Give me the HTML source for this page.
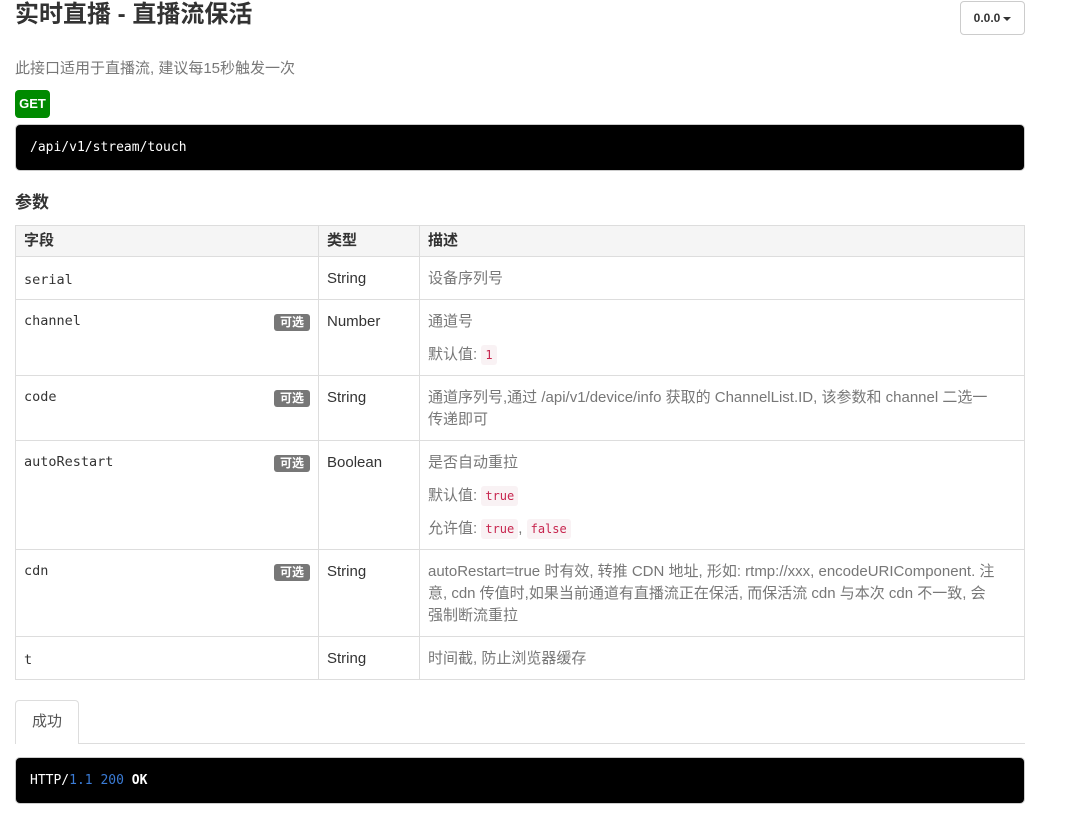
<!DOCTYPE html>
<html><head><meta charset="utf-8"><style>
*{box-sizing:border-box;margin:0;padding:0}
body{width:1084px;height:830px;background:#fff;font-family:"Liberation Sans","Noto Sans CJK SC",sans-serif;font-size:15px;color:#333;position:relative;overflow:hidden}
.abs{position:absolute}
h1{position:absolute;left:15px;top:0;font-size:24px;font-weight:bold;color:#333;line-height:30px}
.ver{left:960px;top:1px;width:65px;height:34px;border:1px solid #ccc;border-radius:4px;font-size:12px;font-weight:bold;text-align:center;line-height:32px}
.ver:after{content:"";display:inline-block;margin-left:3px;border-top:4px solid #333;border-left:4px solid transparent;border-right:4px solid transparent;vertical-align:middle}
.desc{left:15px;top:59px;color:#777;line-height:20px;font-size:15px}
.get{left:15px;top:90px;width:35px;height:28px;background:#008a00;color:#fff;border-radius:4px;font-weight:bold;font-size:13px;text-align:center;line-height:28px}
.pre{left:15px;width:1010px;background:#000;border:1px solid #ccc;border-radius:5px;color:#fff;font-family:"DejaVu Sans Mono",monospace;font-size:13px;padding-left:14px}
h3{position:absolute;left:15px;top:192px;font-size:17px;font-weight:bold;line-height:22px}
table{position:absolute;left:15px;top:225px;width:1010px;border-collapse:collapse}
td,th{border:1px solid #ddd;vertical-align:top;text-align:left;padding:11px 8px 7px;line-height:22px}
th{background:#f5f5f5;font-weight:bold;padding:4px 8px}
td.f{font-family:"DejaVu Sans Mono",monospace;font-size:13.5px;position:relative;padding-top:10px}
td.d{color:#777}
.opt{position:absolute;right:8px;top:14px;background:#777;color:#fff;font-size:12px;font-weight:bold;border-radius:3px;padding:0 6px;line-height:17px;font-family:"Liberation Sans","Noto Sans CJK SC",sans-serif}
code{font-family:"DejaVu Sans Mono",monospace;font-size:12px;color:#c7254e;background:#f9f2f4;padding:3px 4px;border-radius:3px}
p+p{margin-top:11px}
.tab{left:15px;top:700px;width:64px;height:44px;border:1px solid #ddd;border-bottom:none;border-radius:4px 4px 0 0;background:#fff;text-align:center;line-height:42px;color:#555}
.line{left:15px;top:743px;width:1010px;border-top:1px solid #ddd}
</style></head><body>
<h1>实时直播 - 直播流保活</h1>
<div class="abs ver">0.0.0</div>
<div class="abs desc">此接口适用于直播流, 建议每15秒触发一次</div>
<div class="abs get">GET</div>
<div class="abs pre" style="top:124px;height:47px;line-height:45px">/api/v1/stream/touch</div>
<h3>参数</h3>
<table>
<tr style="height:31px"><th style="width:303px">字段</th><th style="width:101px">类型</th><th>描述</th></tr>
<tr style="height:43px"><td class="f" style="padding-top:12px">serial</td><td>String</td><td class="d">设备序列号</td></tr>
<tr style="height:76px"><td class="f">channel<span class="opt">可选</span></td><td>Number</td><td class="d"><p>通道号</p><p>默认值: <code>1</code></p></td></tr>
<tr style="height:65px"><td class="f">code<span class="opt">可选</span></td><td>String</td><td class="d">通道序列号,通过 /api/v1/device/info 获取的 ChannelList.ID, 该参数和 channel 二选一<br>传递即可</td></tr>
<tr style="height:109px"><td class="f">autoRestart<span class="opt">可选</span></td><td>Boolean</td><td class="d"><p>是否自动重拉</p><p>默认值: <code>true</code></p><p>允许值: <code>true</code>, <code>false</code></p></td></tr>
<tr style="height:87px"><td class="f">cdn<span class="opt">可选</span></td><td>String</td><td class="d">autoRestart=true 时有效, 转推 CDN 地址, 形如: rtmp://xxx, encodeURIComponent. 注<br>意, cdn 传值时,如果当前通道有直播流正在保活, 而保活流 cdn 与本次 cdn 不一致, 会<br>强制断流重拉</td></tr>
<tr style="height:43px"><td class="f" style="padding-top:12px">t</td><td>String</td><td class="d">时间截, 防止浏览器缓存</td></tr>
</table>
<div class="abs line"></div>
<div class="abs tab">成功</div>
<div class="abs pre" style="top:757px;height:47px;line-height:45px">HTTP/<span style="color:#3a7bd5">1.1 200</span> <b>OK</b></div>
</body></html>
